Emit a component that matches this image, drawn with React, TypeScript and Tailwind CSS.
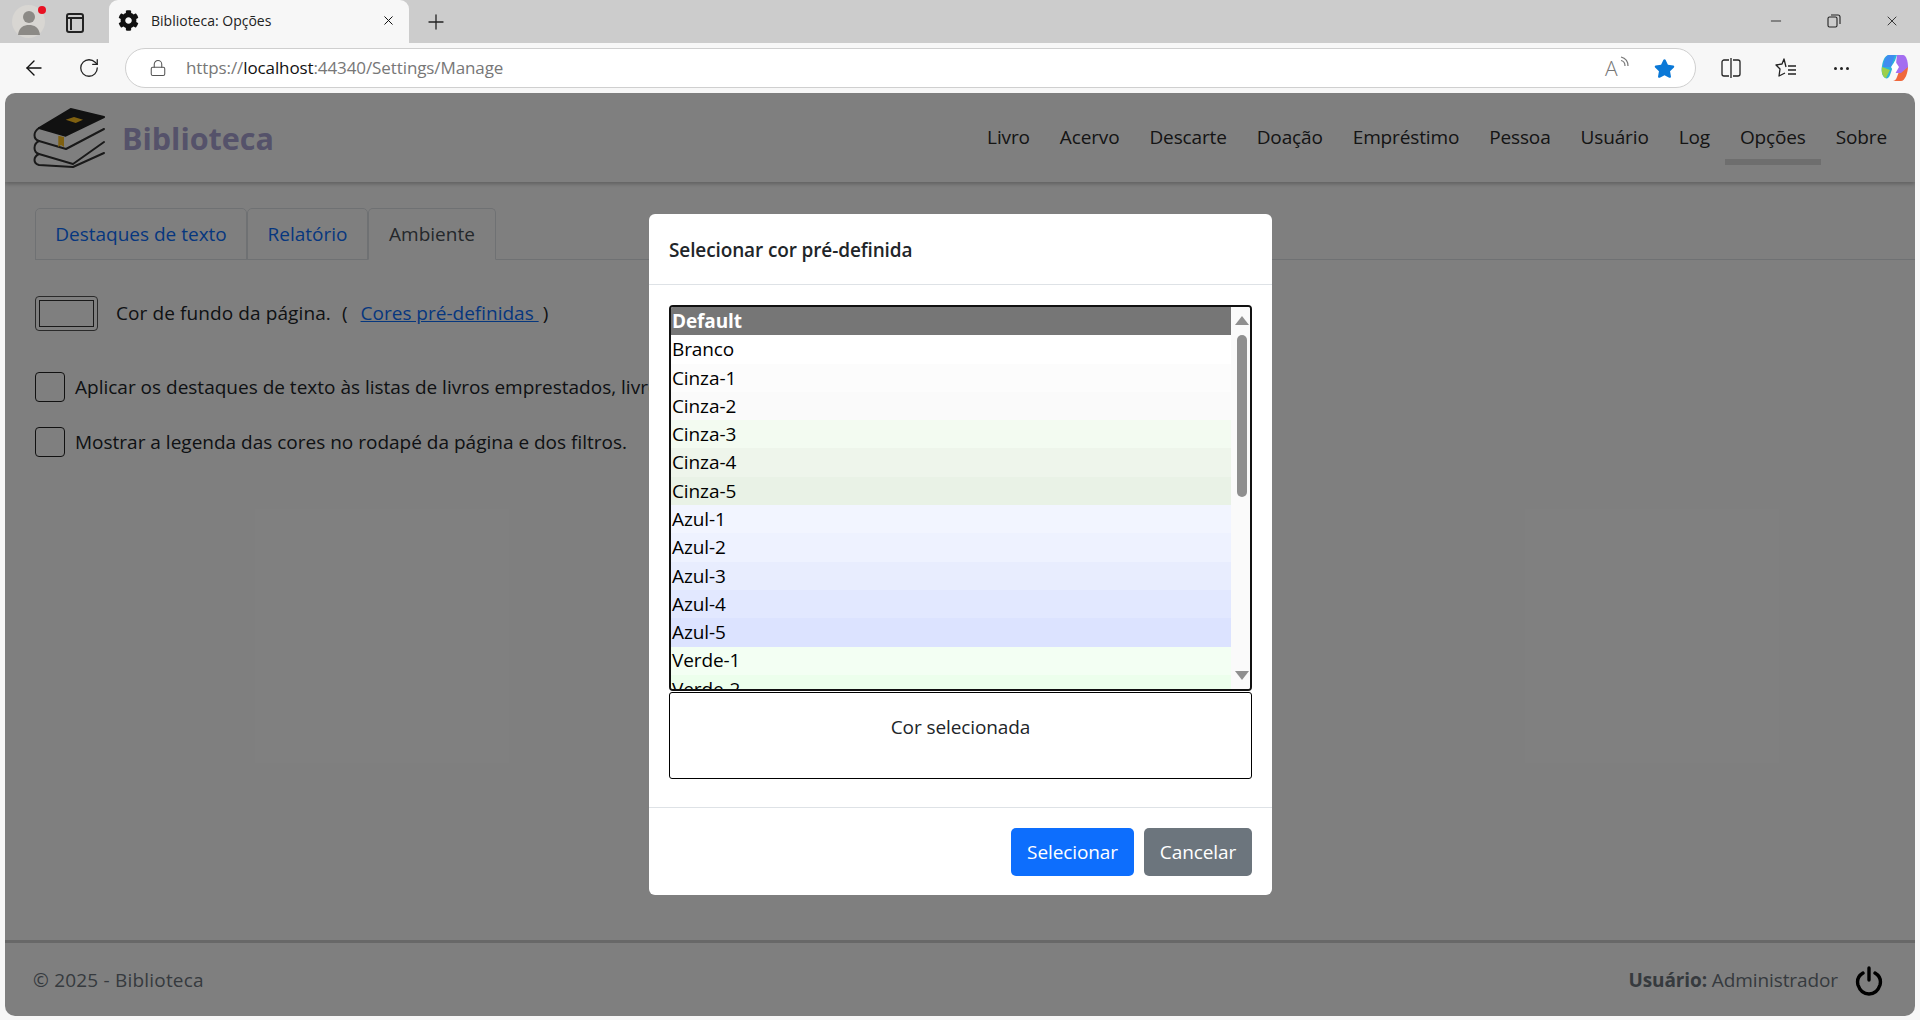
import { ArrowLeft, Lock, Minus, Plus, RotateCw, X } from "lucide-react";
import { FaCog, FaStar } from "react-icons/fa";

const navItems = ["Livro", "Acervo", "Descarte", "Doação", "Empréstimo", "Pessoa", "Usuário", "Log", "Opções", "Sobre"];

const colorRows = [
  { name: "Default", bg: "bg-[#767676] text-white font-bold" },
  { name: "Branco", bg: "bg-white" },
  { name: "Cinza-1", bg: "bg-[#fcfcfc]" },
  { name: "Cinza-2", bg: "bg-[#fafafa]" },
  { name: "Cinza-3", bg: "bg-[#f3fbf1]" },
  { name: "Cinza-4", bg: "bg-[#eef5eb]" },
  { name: "Cinza-5", bg: "bg-[#e9f2e6]" },
  { name: "Azul-1", bg: "bg-[#f2f5ff]" },
  { name: "Azul-2", bg: "bg-[#eef2ff]" },
  { name: "Azul-3", bg: "bg-[#e8edfe]" },
  { name: "Azul-4", bg: "bg-[#e2e8ff]" },
  { name: "Azul-5", bg: "bg-[#dce3ff]" },
  { name: "Verde-1", bg: "bg-[#f3fff3]" },
  { name: "Verde-2", bg: "bg-[#ecffec]" },
];

function Logo() {
  return (
    <svg width="72" height="60" viewBox="0 0 72 60" fill="none" stroke="#333" strokeWidth="2" strokeLinecap="round" strokeLinejoin="round">
      <path d="M6 33 L33 41 L71 21 M6 20 C0 24 0 31 6 33" />
      <path d="M6 33 C0 36 0 44 6 46 L40 56 L71 34" />
      <path d="M6 46 C0 49 0 55 6 57 L40 59 L71 45" />
      <path d="M37.7 1 L71 9 L32.7 27.7 L6 20 Z" fill="#222" stroke="#222" />
      <path d="M32.7 11.7 L41 9 L50 11.7 L42.7 15 Z" fill="#ffc020" stroke="none" />
      <path d="M25.3 27.7 L31 29 V39 L28 37 L25.3 39 Z" fill="#ffc020" stroke="none" />
    </svg>
  );
}

function Copilot() {
  return (
    <svg width="28" height="30" viewBox="0 0 28 30">
      <path d="M8 2 H16 L9 22 C8 25 6 26 4 25 C1 23 0 18 1 13 C2 7 4 2 8 2Z" fill="#2bb5d8" />
      <path d="M8 2 H14 L10 14 H2 C3 7 5 2 8 2Z" fill="#3f8cf0" />
      <path d="M12 28 H20 C24 28 27 20 27 13 H20 L16 24 C15 27 13 28 12 28Z" fill="#f0683c" />
      <path d="M16 2 H22 C25 2 27 8 27 14 L20 20 H14 Z" fill="#a46ef0" />
      <path d="M1 14 C0 19 2 25 5 25 L9 17 Z" fill="#9ccf4a" />
      <path d="M10 14 L14 8 L18 14 L14 21Z" fill="#fff" />
    </svg>
  );
}

function BrowserChrome() {
  return (
    <>
      <div className="flex h-[43px] items-end bg-[#cccccc] pl-[12px] pr-[20px]">
        <div className="relative mb-[5px] flex h-[33px] w-[33px] items-center justify-center rounded-full bg-[#d8d6d2]">
          <svg width="24" height="28" viewBox="0 0 24 28" fill="#8c8a86">
            <circle cx="12" cy="9" r="6" />
            <path d="M1 27 C2 19 7 17 12 17 C17 17 22 19 23 27Z" />
          </svg>
          <span className="absolute right-[-1px] top-[1px] h-[8px] w-[8px] rounded-full bg-[#e81123]" />
        </div>
        <div className="mb-[10px] ml-[21px] h-[20px] w-[18px] rounded-[3px] border-2 border-[#222] bg-transparent">
          <div className="h-[4px] border-b-2 border-[#222]" />
          <div className="h-[11px] w-[4px] border-r-2 border-[#222]" />
        </div>
        <div className="ml-[25px] flex h-[43px] w-[300px] items-center rounded-t-[9px] bg-[#f7f7f7] pb-[2px] pl-[9px] pr-[13px]">
          <FaCog className="text-[21px] text-[#111]" />
          <span className="ml-[12px] text-[14px] text-[#222]">Biblioteca: Opções</span>
          <X className="ml-auto h-[15px] w-[15px] text-[#111]" strokeWidth={1.6} />
        </div>
        <Plus className="mb-[9px] ml-[15px] h-[24px] w-[24px] text-[#222]" strokeWidth={1.3} />
        <div className="mb-[14px] ml-auto flex items-center gap-[43px]">
          <Minus className="h-[16px] w-[16px] text-[#222]" strokeWidth={1.3} />
          <svg width="14" height="14" viewBox="0 0 14 14" fill="none" stroke="#222" strokeWidth="1.1">
            <rect x="1" y="3" width="9" height="10" rx="1.5" />
            <path d="M4 1 H11 C12 1 13 2 13 3 V10" />
          </svg>
          <X className="h-[16px] w-[16px] text-[#222]" strokeWidth={1.3} />
        </div>
      </div>
      <div className="flex h-[50px] items-center bg-[#f7f7f7] pl-[22px] pr-[11px]">
        <ArrowLeft className="h-[24px] w-[24px] shrink-0 text-[#111]" strokeWidth={1.4} />
        <RotateCw className="ml-[32px] h-[22px] w-[22px] shrink-0 text-[#222]" strokeWidth={1.4} />
        <div className="ml-[25px] flex h-[40px] flex-1 items-center rounded-full border border-[#cfcfcf] bg-white pl-[23px] pr-[20px]">
          <Lock className="h-[18px] w-[18px] text-[#555]" strokeWidth={1.4} />
          <span className="ml-[19px] text-[17px] tracking-[-0.1px] text-[#777]">
            https://<span className="text-[#111]">localhost</span>:44340/Settings/Manage
          </span>
          <span className="relative ml-auto flex h-[22px] w-[22px] items-center text-[21px] font-light leading-none text-[#777]">
            A
            <svg className="absolute right-[-3px] top-[-1px]" width="10" height="12" viewBox="0 0 10 12" fill="none" stroke="#777" strokeWidth="1.2">
              <path d="M1 1 C5 2 8 5 8 10 M1 4.5 C3.5 5 5 7 5 10" />
            </svg>
          </span>
          <FaStar className="ml-[27px] text-[21px] text-[#0a78d7]" />
        </div>
        <svg className="ml-[25px] shrink-0" width="20" height="20" viewBox="0 0 20 20" fill="none" stroke="#222" strokeWidth="1.3">
          <path d="M8 2 H3 C2 2 1 3 1 4 V16 C1 17 2 18 3 18 H8 M12 2 H17 C18 2 19 3 19 4 V16 C19 17 18 18 17 18 H12 M10 0 V20" />
        </svg>
        <svg className="ml-[34px] shrink-0" width="22" height="22" viewBox="0 0 22 22" fill="none" stroke="#222" strokeWidth="1.3" strokeLinejoin="round">
          <path d="M11 10 L9 2 L7 7 L1 8 L5 12 L4 19 L10 16 M13 9 H21 M13 13 H21 M13 17 H21" />
        </svg>
        <div className="ml-[37px] flex gap-[3px]">
          <span className="h-[3px] w-[3px] rounded-full bg-[#222]" />
          <span className="h-[3px] w-[3px] rounded-full bg-[#222]" />
          <span className="h-[3px] w-[3px] rounded-full bg-[#222]" />
        </div>
        <div className="ml-[32px]">
          <Copilot />
        </div>
      </div>
    </>
  );
}

function Header() {
  return (
    <header className="flex h-[89px] items-center justify-between pl-[28px] pr-[13px] shadow-[0_2px_4px_rgba(0,0,0,0.25)]">
      <div className="flex items-center gap-[17px]">
        <Logo />
        <span className="pt-[2px] text-[30.5px] font-bold text-[#aaa4d4]">Biblioteca</span>
      </div>
      <nav className="flex h-full items-start">
        {navItems.map((item) => (
          <a
            key={item}
            className={`flex h-[72px] items-center border-b-[6px] px-[15px] pt-[23px] text-[19px] tracking-[-0.14px] text-[#2a2a2a] ${
              item === "Opções" ? "border-[#dcdcdc]" : "border-transparent"
            }`}
          >
            {item}
          </a>
        ))}
      </nav>
    </header>
  );
}

function Tabs() {
  return (
    <div className="flex h-[52px] border-b border-[#dee2e6]">
      <a className="flex h-[52px] w-[212px] items-center justify-center rounded-t-[5px] border border-[#dee2e6] pt-[1px] text-[#0d6efd]">
        Destaques de texto
      </a>
      <a className="flex h-[52px] w-[121px] items-center justify-center rounded-t-[5px] border border-[#dee2e6] pt-[1px] text-[#0d6efd]">
        Relatório
      </a>
      <a className="flex h-[52px] w-[128px] items-center justify-center rounded-t-[5px] border border-[#dee2e6] border-b-white bg-white pt-[1px] text-[#495057]">
        Ambiente
      </a>
    </div>
  );
}

function Modal() {
  return (
    <div className="absolute left-[644px] top-[121px] flex h-[681px] w-[623px] flex-col rounded-[6px] bg-white">
      <div className="flex h-[71px] items-center border-b border-[#dee2e6] px-[20px] pt-[2px] text-[19px] font-semibold tracking-[-0.12px] text-[#212529]">
        Selecionar cor pré-definida
      </div>
      <div className="flex h-[523px] flex-col border-b border-[#dee2e6] px-[20px] pt-[20px]">
        <div className="flex h-[386px] overflow-hidden rounded-[4px] border-[2px] border-[#111]">
          <div className="flex-1 overflow-hidden text-[19px] tracking-[-0.1px] text-black">
            {colorRows.map((row) => (
              <div key={row.name} className={`flex h-[28.3px] items-center pl-[1px] ${row.bg}`}>
                {row.name}
              </div>
            ))}
          </div>
          <div className="flex w-[19px] flex-col items-center bg-[#fafafa] py-[9px] pl-[2px]">
            <span className="h-0 w-0 border-x-[7px] border-b-[9px] border-x-transparent border-b-[#8f8f8f]" />
            <span className="mt-[10px] h-[162px] w-[10px] rounded-full bg-[#8f8f8f]" />
            <span className="mt-auto h-0 w-0 border-x-[7px] border-t-[9px] border-x-transparent border-t-[#8f8f8f]" />
          </div>
        </div>
        <div className="mt-[1px] flex h-[87px] justify-center rounded-[3px] border border-black pt-[20px] text-[19px] tracking-[-0.1px] text-[#212529]">
          Cor selecionada
        </div>
      </div>
      <div className="flex flex-1 items-start justify-end gap-[10px] px-[20px] pt-[20px]">
        <button className="h-[48px] w-[123px] rounded-[5px] bg-[#0d6efd] text-[19px] tracking-[-0.1px] text-white">Selecionar</button>
        <button className="h-[48px] w-[108px] rounded-[5px] bg-[#6c757d] text-[19px] tracking-[-0.1px] text-white">Cancelar</button>
      </div>
    </div>
  );
}

export default function App() {
  return (
    <div className="flex h-[1020px] w-[1920px] flex-col overflow-hidden bg-[#f7f7f7] font-['Open_Sans',sans-serif]">
      <BrowserChrome />
      <div className="relative mx-[5px] mb-[4px] flex flex-1 flex-col overflow-hidden rounded-[10px] bg-white">
        <Header />
        <main className="flex-1 pl-[30px] pt-[26px] text-[19px] text-[#212529]">
          <Tabs />
          <div className="mt-[36px] flex h-[35px] items-center">
            <div className="h-[35px] w-[63px] rounded-[4px] border border-[#555] p-[3px]">
              <div className="h-full border border-[#333]" />
            </div>
            <span className="ml-[18px] tracking-[0.1px]">Cor de fundo da página.</span>
            <span className="ml-[11px]">(</span>
            <a className="ml-[13px] whitespace-pre text-[#0d6efd] underline">Cores pré-definidas </a>
            <span className="ml-[4px]">)</span>
          </div>
          <div className="mt-[41px] flex h-[30px] items-center whitespace-nowrap">
            <span className="h-[30px] w-[30px] rounded-[4px] border border-[#222]" />
            <span className="ml-[10px]">Aplicar os destaques de texto às listas de livros emprestados, livros</span>
          </div>
          <div className="mt-[25px] flex h-[30px] items-center whitespace-nowrap">
            <span className="h-[30px] w-[30px] rounded-[4px] border border-[#222]" />
            <span className="ml-[10px]">Mostrar a legenda das cores no rodapé da página e dos filtros.</span>
          </div>
        </main>
        <footer className="flex h-[76px] items-center justify-between border-t-[3px] border-[#d0d0d0] pl-[28px] pr-[32px] pt-[2px] text-[19px] text-[#6c757d]">
          <span className="tracking-[0.2px]">© 2025 - Biblioteca</span>
          <div className="flex items-center">
            <span className="tracking-[-0.1px]">
              <b>Usuário:</b> Administrador
            </span>
            <svg className="ml-[17px]" width="28" height="30" viewBox="0 0 28 30" fill="none" stroke="#000" strokeWidth="3.4" strokeLinecap="round">
              <path d="M14 2 V14 M8 7 C3 10 2 15 3 19 C5 25 9 28 14 28 C19 28 23 25 25 19 C26 15 25 10 20 7" />
            </svg>
          </div>
        </footer>
        <div className="absolute inset-0 bg-black/50" />
        <Modal />
      </div>
    </div>
  );
}
